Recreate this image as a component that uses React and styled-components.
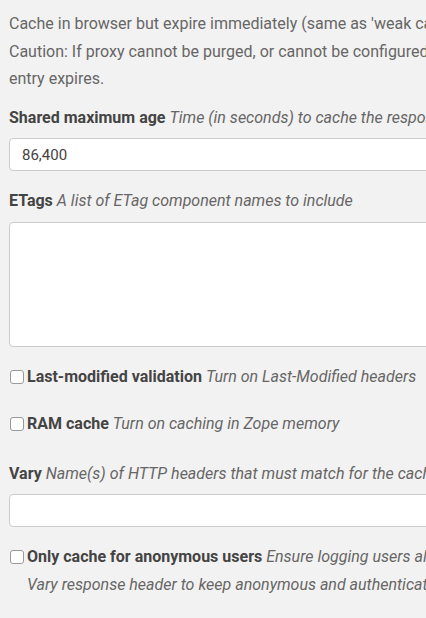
import React from 'react';
import styled, { createGlobalStyle } from 'styled-components';

const GlobalStyle = createGlobalStyle`
  html, body {
    margin: 0;
    padding: 0;
    background: #f3f2f2;
    overflow: hidden;
  }
  body {
    font-family: Roboto, "Liberation Sans", sans-serif;
    font-size: 16px;
    color: #666;
  }
`;

const Form = styled.div`
  width: 760px;
  padding: 10px 9px 0;
`;

const Intro = styled.p`
  margin: 0 0 11px;
  line-height: 27.5px;
  white-space: nowrap;
`;

const Field = styled.div`
  margin-bottom: ${(p) => p.$gap || 16}px;
`;

const Label = styled.label`
  display: block;
  line-height: 27.5px;
  margin-bottom: 7px;
  white-space: nowrap;
  color: #444;
  font-weight: 700;
`;

const Help = styled.span`
  font-weight: 400;
  font-style: italic;
  color: #666;
`;

const TextInput = styled.input`
  display: block;
  box-sizing: border-box;
  width: 100%;
  height: 33px;
  padding: 0 12px;
  border: 1px solid #ccc;
  border-radius: 4px;
  background: #fff;
  font-family: inherit;
  font-size: 15px;
  color: #444;
  outline: none;
`;

const TextArea = styled.textarea`
  display: block;
  box-sizing: border-box;
  width: 100%;
  height: 125px;
  border: 1px solid #ccc;
  border-radius: 4px;
  background: #fff;
  resize: none;
  outline: none;
`;

const CheckRow = styled.div`
  display: flex;
  align-items: flex-start;
  margin-bottom: ${(p) => p.$gap || 20}px;
`;

const Box = styled.input`
  appearance: none;
  flex: none;
  width: 14px;
  height: 14px;
  margin: 7px 3px 0 1px;
  border: 1px solid #999;
  border-radius: 3px;
  background: #fff;
  box-sizing: border-box;
`;

const CheckLabel = styled.label`
  line-height: 27.5px;
  white-space: nowrap;
  color: #444;
  font-weight: 700;
`;

const App = () => (
  <>
    <GlobalStyle />
    <Form>
      <Intro>
        Cache in browser but expire immediately (same as 'weak caching'), and cache in proxy.
        <br />
        Caution: If proxy cannot be purged, or cannot be configured to remove cookies, the cache
        <br />
        entry expires.
      </Intro>

      <Field>
        <Label>
          Shared maximum age <Help>Time (in seconds) to cache the response in the caching proxy</Help>
        </Label>
        <TextInput defaultValue="86,400" />
      </Field>

      <Field $gap={16}>
        <Label>
          ETags <Help>A list of ETag component names to include</Help>
        </Label>
        <TextArea />
      </Field>

      <CheckRow>
        <Box type="checkbox" id="lm" />
        <CheckLabel htmlFor="lm">
          Last-modified validation <Help>Turn on Last-Modified headers</Help>
        </CheckLabel>
      </CheckRow>

      <CheckRow $gap={22}>
        <Box type="checkbox" id="ram" />
        <CheckLabel htmlFor="ram">
          RAM cache <Help>Turn on caching in Zope memory</Help>
        </CheckLabel>
      </CheckRow>

      <Field>
        <Label>
          Vary <Help>Name(s) of HTTP headers that must match for the caching proxy to return a cached response</Help>
        </Label>
        <TextInput />
      </Field>

      <CheckRow>
        <Box type="checkbox" id="anon" />
        <CheckLabel htmlFor="anon">
          Only cache for anonymous users <Help>Ensure logging users always get a fresh page. Note that if you are caching pages in a proxy cache, you'll still need to set a</Help>
          <br />
          <Help>Vary response header to keep anonymous and authenticated content separate.</Help>
        </CheckLabel>
      </CheckRow>
    </Form>
  </>
);

export default App;
